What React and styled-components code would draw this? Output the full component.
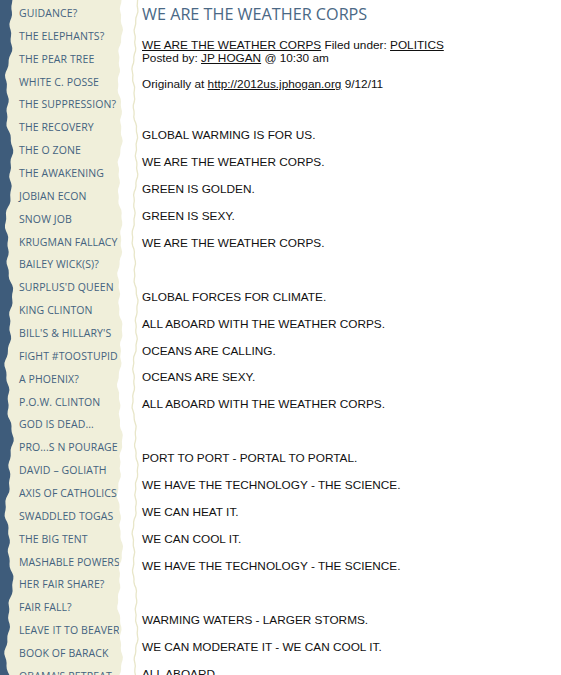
import React from "react";
import styled, { createGlobalStyle } from "styled-components";

const GlobalStyle = createGlobalStyle`
  html, body { margin: 0; padding: 0; background: #ffffff; }
  body { font-family: "Liberation Sans", Arial, sans-serif; }
`;

const H = 675;

function wave(base, amps, step = 3) {
  const pts = [];
  for (let y = 0; y <= H + step; y += step) {
    let x = base;
    amps.forEach(([a, f, p]) => {
      x += a * Math.sin(y * f + p);
    });
    pts.push([x, y]);
  }
  return pts;
}

const blueEdge = wave(9, [
  [2.6, 0.045, 0.5],
  [1.5, 0.13, 1.3],
  [0.8, 0.37, 2.1],
]);
const beigeEdge = wave(120, [
  [1.6, 0.06, 0.2],
  [1.0, 0.17, 2.4],
  [0.6, 0.45, 1.0],
]);
const lineEdge = wave(135, [
  [1.8, 0.04, 1.6],
  [1.0, 0.15, 0.4],
  [0.5, 0.5, 2.0],
]);

const toPoly = (pts, leftX) =>
  `M${leftX},0 ` + pts.map(([x, y]) => `L${x.toFixed(1)},${y}`).join(" ") + ` L${leftX},${H + 3} Z`;
const toLine = (pts) =>
  `M${pts[0][0].toFixed(1)},0 ` + pts.map(([x, y]) => `L${x.toFixed(1)},${y}`).join(" ");

const Page = styled.div`
  position: relative;
  display: flex;
  align-items: flex-start;
  min-height: ${H}px;
`;

const Decor = styled.svg`
  position: absolute;
  left: 0;
  top: 0;
  width: 140px;
  height: ${H}px;
  z-index: 0;
`;

const Aside = styled.nav`
  position: relative;
  z-index: 1;
  flex: 0 0 119px;
  height: ${H}px;
  overflow: hidden;
`;

const NavList = styled.ul`
  list-style: none;
  margin: 0;
  padding: 2px 0 0 19px;
`;

const NavItem = styled.li`
  height: 22.86px;
  line-height: 22.86px;
  white-space: nowrap;
  font-family: "Open Sans", "Noto Sans", sans-serif;
  font-size: 10.5px;
  letter-spacing: 0.1px;
  color: #44637f;
  text-transform: uppercase;
`;

const Main = styled.main`
  position: relative;
  z-index: 1;
  flex: 1;
  padding: 2px 0 0 23px;
`;

const Title = styled.h1`
  margin: 0 0 13px;
  font-family: "Open Sans", "Noto Sans", sans-serif;
  font-weight: 400;
  font-size: 16.2px;
  line-height: 24px;
  color: #4a6885;
`;

const Meta = styled.div`
  font-size: 11.8px;
  line-height: 13px;
  color: #111;
`;

const A = styled.a`
  color: #111;
  text-decoration: underline;
`;

const Line = styled.p`
  margin: 0 0 12.95px;
  font-size: 11.8px;
  line-height: 14px;
  color: #111;
  min-height: 14px;
`;

const Spacer = styled.div`
  height: ${(p) => p.$h}px;
`;

const navItems = [
  "GUIDANCE?",
  "THE ELEPHANTS?",
  "THE PEAR TREE",
  "WHITE C. POSSE",
  "THE SUPPRESSION?",
  "THE RECOVERY",
  "THE O ZONE",
  "THE AWAKENING",
  "JOBIAN ECON",
  "SNOW JOB",
  "KRUGMAN FALLACY",
  "BAILEY WICK(S)?",
  "SURPLUS'D QUEEN",
  "KING CLINTON",
  "BILL'S & HILLARY'S",
  "FIGHT #TOOSTUPID",
  "A PHOENIX?",
  "P.O.W. CLINTON",
  "GOD IS DEAD...",
  "PRO...S N POURAGE",
  "DAVID – GOLIATH",
  "AXIS OF CATHOLICS",
  "SWADDLED TOGAS",
  "THE BIG TENT",
  "MASHABLE POWERS",
  "HER FAIR SHARE?",
  "FAIR FALL?",
  "LEAVE IT TO BEAVER",
  "BOOK OF BARACK",
  "OBAMA'S RETREAT",
];

const groups = [
  [
    "GLOBAL WARMING IS FOR US.",
    "WE ARE THE WEATHER CORPS.",
    "GREEN IS GOLDEN.",
    "GREEN IS SEXY.",
    "WE ARE THE WEATHER CORPS.",
  ],
  [
    "GLOBAL FORCES FOR CLIMATE.",
    "ALL ABOARD WITH THE WEATHER CORPS.",
    "OCEANS ARE CALLING.",
    "OCEANS ARE SEXY.",
    "ALL ABOARD WITH THE WEATHER CORPS.",
  ],
  [
    "PORT TO PORT - PORTAL TO PORTAL.",
    "WE HAVE THE TECHNOLOGY - THE SCIENCE.",
    "WE CAN HEAT IT.",
    "WE CAN COOL IT.",
    "WE HAVE THE TECHNOLOGY - THE SCIENCE.",
  ],
  [
    "WARMING WATERS - LARGER STORMS.",
    "WE CAN MODERATE IT - WE CAN COOL IT.",
    "ALL ABOARD",
  ],
];

export default function App() {
  return (
    <>
      <GlobalStyle />
      <Page>
        <Decor viewBox={`0 0 140 ${H}`} preserveAspectRatio="none">
          <path d={toPoly(beigeEdge, 0)} fill="#f0efda" />
          <path d={toPoly(blueEdge, 0)} fill="#3e5c7b" />
          <path d={toLine(lineEdge)} fill="none" stroke="#e8e6c9" strokeWidth="1.3" />
        </Decor>
        <Aside>
          <NavList>
            {navItems.map((t) => (
              <NavItem key={t}>{t}</NavItem>
            ))}
          </NavList>
        </Aside>
        <Main>
          <Title>WE ARE THE WEATHER CORPS</Title>
          <Meta>
            <A href="#">WE ARE THE WEATHER CORPS</A> Filed under: <A href="#">POLITICS</A>
            <br />
            Posted by: <A href="#">JP HOGAN</A> @ 10:30 am
          </Meta>
          <Spacer $h={12} />
          <Line>
            Originally at <A href="#">http://2012us.jphogan.org</A> 9/12/11
          </Line>
          <Spacer $h={24} />
          {groups.map((g, gi) => (
            <React.Fragment key={gi}>
              {g.map((t, i) => (
                <Line key={i}>{t}</Line>
              ))}
              {gi < groups.length - 1 && <Spacer $h={27} />}
            </React.Fragment>
          ))}
        </Main>
      </Page>
    </>
  );
}
